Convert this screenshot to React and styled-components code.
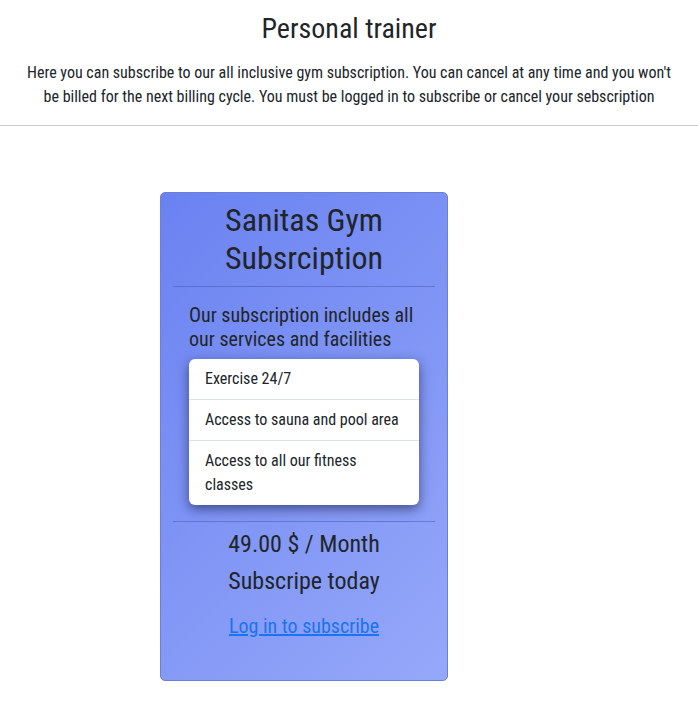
import React from 'react';
import styled, { createGlobalStyle } from 'styled-components';

const GlobalStyle = createGlobalStyle`
    body {
        margin: 0;
        background: #fff;
        color: #212529;
        font-family: "Roboto", "Liberation Sans", sans-serif;
        font-stretch: 75%;
    }
`;

const Page = styled.div`
    width: 100%;
`;

const Header = styled.header`
    text-align: center;
    padding-top: 12px;
    border-bottom: 1px solid #ccc;
    padding-bottom: 16px;

    h1 {
        margin: 0;
        font-size: 28px;
        font-weight: 400;
        line-height: 34px;
    }

    p {
        margin: 15px auto 0;
        padding: 0 22px;
        font-size: 16px;
        line-height: 24px;
    }
`;

const Body = styled.main`
    padding-top: 66px;
    padding-left: 160px;
`;

const Card = styled.div`
    width: 288px;
    height: 489px;
    border: 1px solid #6a7fd6;
    border-radius: 5px;
    background: linear-gradient(135deg, #6a82f1 0%, #95a8f9 100%);
    padding: 0 12px;
    box-sizing: border-box;
    display: flex;
    flex-direction: column;
`;

const CardTitle = styled.h2`
    margin: 0;
    padding: 8px 0 9px;
    text-align: center;
    font-size: 32px;
    font-weight: 400;
    line-height: 38px;
    border-bottom: 1px solid rgba(60, 80, 170, 0.45);
`;

const Intro = styled.p`
    margin: 16px 0 8px;
    padding: 0 16px;
    font-size: 20px;
    line-height: 24px;
`;

const FeatureList = styled.ul`
    list-style: none;
    margin: 0 16px 16px;
    padding: 0;
    width: 230px;
    background: #fff;
    border-radius: 6px;
    box-shadow: 0 4px 12px rgba(20, 25, 70, 0.6);
`;

const Feature = styled.li`
    padding: 8px 16px;
    font-size: 16px;
    line-height: 24px;
    border-top: ${p => (p.$first ? 'none' : '1px solid #dee2e6')};
`;

const Footer = styled.div`
    border-top: 1px solid rgba(60, 80, 170, 0.45);
    text-align: center;
    padding-top: 7px;
`;

const Price = styled.div`
    font-size: 24px;
    line-height: 30px;
    margin-bottom: 7px;
`;

const LoginLink = styled.a`
    display: inline-block;
    margin-top: 9px;
    font-size: 20px;
    line-height: 28px;
    color: #1a73f0;
    text-decoration: underline;
`;

const features = ['Exercise 24/7', 'Access to sauna and pool area', 'Access to all our fitness classes'];

const App = () => {
    return (
        <>
            <GlobalStyle />
            <Page>
                <Header>
                    <h1>Personal trainer</h1>
                    <p>Here you can subscribe to our all inclusive gym subscription. You can cancel at any time and you won't be billed for the next billing cycle. You must be logged in to subscribe or cancel your sebscription</p>
                </Header>
                <Body>
                    <Card>
                        <CardTitle>Sanitas Gym Subsrciption</CardTitle>
                        <Intro>Our subscription includes all our services and facilities</Intro>
                        <FeatureList>
                            {features.map((f, i) => (
                                <Feature key={f} $first={i === 0}>{f}</Feature>
                            ))}
                        </FeatureList>
                        <Footer>
                            <Price>49.00 $ / Month</Price>
                            <Price>Subscripe today</Price>
                            <LoginLink href="#">Log in to subscribe</LoginLink>
                        </Footer>
                    </Card>
                </Body>
            </Page>
        </>
    );
};

export default App;
